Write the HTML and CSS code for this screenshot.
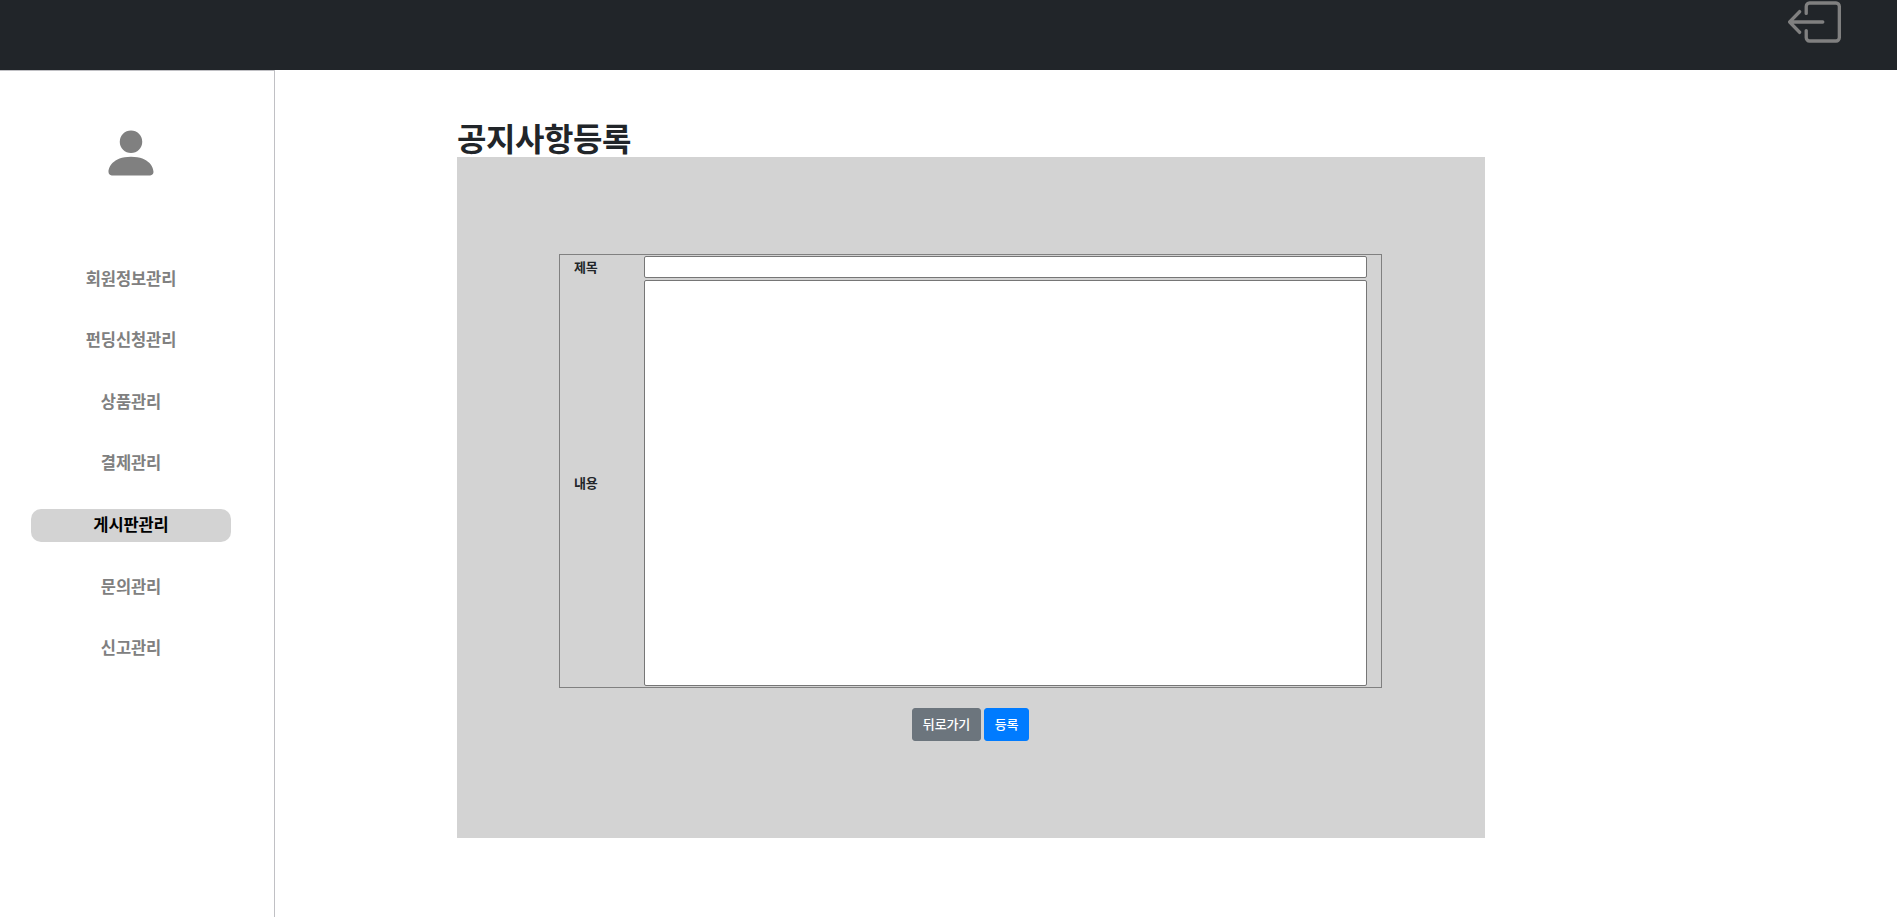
FILE: index.html
```html
<!DOCTYPE html>
<html lang="ko">
<head>
<meta charset="utf-8">
<title>공지사항등록</title>
<link rel="stylesheet" href="styles.css">
</head>
<body>
<header class="topbar">
  <a class="logout" aria-label="로그아웃">
    <svg class="logout-icon" viewBox="0 1.9 16 12.2" preserveAspectRatio="none" fill="currentColor">
      <path fill-rule="evenodd" d="M6 12.5a.5.5 0 0 0 .5.5h8a.5.5 0 0 0 .5-.5v-9a.5.5 0 0 0-.5-.5h-8a.5.5 0 0 0-.5.5v2a.5.5 0 0 1-1 0v-2A1.5 1.5 0 0 1 6.5 2h8A1.5 1.5 0 0 1 16 3.5v9a1.5 1.5 0 0 1-1.5 1.5h-8A1.5 1.5 0 0 1 5 12.5v-2a.5.5 0 0 1 1 0z"/>
      <path fill-rule="evenodd" d="M.146 8.354a.5.5 0 0 1 0-.708l3-3a.5.5 0 1 1 .708.708L1.707 7.5H10.5a.5.5 0 0 1 0 1H1.707l2.147 2.146a.5.5 0 0 1-.708.708z"/>
    </svg>
  </a>
</header>
<div class="layout">
  <aside class="sidebar">
    <svg class="avatar" viewBox="0 0 16 16" fill="currentColor">
      <path d="M3 14s-1 0-1-1 1-4 6-4 6 3 6 4-1 1-1 1zm5-6a3 3 0 1 0 0-6 3 3 0 0 0 0 6z"/>
    </svg>
    <nav class="menu">
      <a class="menu-item">회원정보관리</a>
      <a class="menu-item">펀딩신청관리</a>
      <a class="menu-item">상품관리</a>
      <a class="menu-item">결제관리</a>
      <a class="menu-item active">게시판관리</a>
      <a class="menu-item">문의관리</a>
      <a class="menu-item">신고관리</a>
    </nav>
  </aside>
  <main class="content">
    <h1 class="title">공지사항등록</h1>
    <form class="panel">
      <div class="fields">
        <label class="label" for="subject">제목</label>
        <input class="control" id="subject" type="text">
        <label class="label" for="body">내용</label>
        <textarea class="control" id="body"></textarea>
      </div>
      <div class="actions">
        <button class="btn btn-secondary" type="button">뒤로가기</button>
        <button class="btn btn-primary" type="button">등록</button>
      </div>
    </form>
  </main>
</div>
</body>
</html>
```
FILE: styles.css
```css
* {
  box-sizing: border-box;
}

body {
  margin: 0;
  height: 917px;
  overflow: hidden;
  display: flex;
  flex-direction: column;
  background: #fff;
  color: #212529;
  font-family: "Noto Sans CJK KR", sans-serif;
}

.topbar {
  flex: none;
  height: 70px;
  display: flex;
  justify-content: flex-end;
  padding: 1px 56px 0 0;
  background: #212529;
}

.logout {
  color: gray;
}

.logout-icon {
  display: block;
  width: 53px;
  height: 42px;
}

.layout {
  flex: 1;
  display: flex;
}

.sidebar {
  width: 275px;
  display: flex;
  flex-direction: column;
  align-items: center;
  padding: 52px 12px 0 0;
  border-top: 1px solid #c0c0c4;
  border-right: 1px solid #c0c0c4;
}

.avatar {
  width: 60px;
  height: 60px;
  color: gray;
}

.menu {
  display: flex;
  flex-direction: column;
  gap: 28.56px;
  margin-top: 79.85px;
}

.menu-item {
  width: 200px;
  height: 33px;
  border-radius: 10px;
  color: gray;
  font-size: 16.5px;
  font-weight: 700;
  line-height: 30.8px;
  letter-spacing: -0.1px;
  text-align: center;
}

.menu-item.active {
  background: lightgray;
  color: #000;
}

.content {
  width: 1028px;
  margin-left: 182px;
  padding-top: 49px;
}

.title {
  height: 38px;
  margin: 0;
  font-size: 32px;
  font-weight: 700;
  line-height: 36px;
  letter-spacing: -0.44px;
}

.panel {
  height: 681px;
  display: flex;
  flex-direction: column;
  align-items: center;
  padding: 97px 1px 0 0;
  background: lightgray;
}

.fields {
  width: 823px;
  display: grid;
  grid-template-columns: 70px 723px;
  grid-template-rows: 22px 406px;
  column-gap: 0;
  row-gap: 2px;
  align-items: center;
  padding: 1px 14px;
  border: 1px solid gray;
}

.label {
  font-size: 13px;
  font-weight: 700;
  line-height: 18px;
  letter-spacing: -0.3px;
}

.control {
  width: 100%;
  height: 100%;
  margin: 0;
  border: 1px solid #767676;
  border-radius: 2px;
  background: #fff;
  resize: none;
}

.actions {
  display: flex;
  gap: 3px;
  margin-top: 20px;
}

.btn {
  height: 33px;
  padding: 0 0 3px;
  border: 1px solid;
  border-radius: 3px;
  color: #fff;
  font-family: inherit;
  font-size: 13px;
  font-weight: 500;
  line-height: 1;
  letter-spacing: -0.1px;
  white-space: nowrap;
}

.btn-secondary {
  width: 69px;
  border-color: #6c757d;
  background: #6c757d;
}

.btn-primary {
  width: 45px;
  border-color: #007bff;
  background: #007bff;
}
```
